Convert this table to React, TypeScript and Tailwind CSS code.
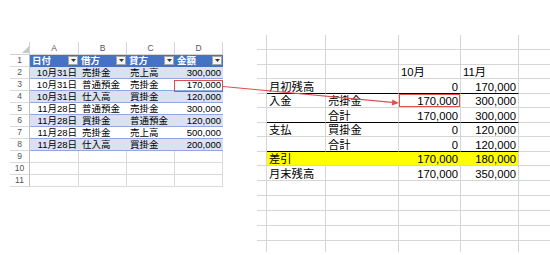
import React from "react";

const FONT = "font-['Liberation_Sans','Noto_Sans_CJK_JP',sans-serif]";

type LRow = { n: number; a: string; b: string; c: string; d: string; band: boolean; red?: boolean };

const leftRows: LRow[] = [
  { n: 2, a: "10月31日", b: "売掛金", c: "売上高", d: "300,000", band: true },
  { n: 3, a: "10月31日", b: "普通預金", c: "売掛金", d: "170,000", band: false, red: true },
  { n: 4, a: "10月31日", b: "仕入高", c: "買掛金", d: "120,000", band: true },
  { n: 5, a: "11月28日", b: "普通預金", c: "売掛金", d: "300,000", band: false },
  { n: 6, a: "11月28日", b: "買掛金", c: "普通預金", d: "120,000", band: true },
  { n: 7, a: "11月28日", b: "売掛金", c: "売上高", d: "500,000", band: false },
  { n: 8, a: "11月28日", b: "仕入高", c: "買掛金", d: "200,000", band: true },
];

function Dropdown() {
  return (
    <div className="absolute right-[1px] top-[1px] w-[10px] h-[9px] bg-[#f7f7f7] border border-[#a6a6a6] flex items-center justify-center">
      <svg width="5" height="3" viewBox="0 0 5 3">
        <polygon points="0,0 5,0 2.5,3" fill="#333" />
      </svg>
    </div>
  );
}

function RowNum({ n }: { n: number }) {
  return (
    <div className="w-[20px] h-[12px] shrink-0 border-r border-b border-r-[#bfbfbf] border-b-[#dadada] text-[8.5px] leading-[11px] text-center text-[#555]">
      {n}
    </div>
  );
}

function LeftSheet() {
  return (
    <div className={`ml-[10px] mt-[42px] w-[213px] flex flex-col ${FONT}`}>
      <div className="flex h-[13px]">
        <div className="w-[20px] shrink-0 border-r border-b border-[#cfcfcf] relative">
          <svg className="absolute left-[12px] top-[4px]" width="7" height="7" viewBox="0 0 7 7">
            <polygon points="7,0 7,7 0,7" fill="#c8c8c8" />
          </svg>
        </div>
        {[
          ["A", "w-[49px]"],
          ["B", "w-[48px]"],
          ["C", "w-[48px]"],
          ["D", "w-[48px]"],
        ].map(([l, w]) => (
          <div
            key={l}
            className={`${w} shrink-0 border-r border-b border-[#d6d6d6] text-[8.5px] leading-[12px] text-center text-[#555]`}
          >
            {l}
          </div>
        ))}
      </div>
      <div className="flex h-[12px]">
        <RowNum n={1} />
        <div className="flex bg-[#4472c4] text-white font-bold text-[9.5px] leading-[12px]">
          {[
            ["日付", "w-[49px]"],
            ["借方", "w-[48px]"],
            ["貸方", "w-[48px]"],
            ["金額", "w-[48px]"],
          ].map(([t, w]) => (
            <div key={t} className={`${w} relative pl-[2px] whitespace-nowrap`}>
              {t}
              <Dropdown />
            </div>
          ))}
        </div>
      </div>
      {leftRows.map((r) => (
        <div key={r.n} className="flex h-[12px]">
          <RowNum n={r.n} />
          <div
            className={`flex border-b border-[#8ea9db] text-[9.5px] leading-[11px] text-black ${
              r.band ? "bg-[#d9e1f2]" : "bg-white"
            }`}
          >
            <div className="w-[49px] pr-[2px] text-right whitespace-nowrap">{r.a}</div>
            <div className="w-[48px] pl-[3px] whitespace-nowrap">{r.b}</div>
            <div className="w-[48px] pl-[3px] whitespace-nowrap">{r.c}</div>
            <div className="w-[48px] pr-[2px] text-right whitespace-nowrap relative">
              {r.d}
              {r.red && <div className="absolute left-[-1px] right-0 top-[1px] bottom-[-2px] border border-[#e0504f]" />}
            </div>
          </div>
        </div>
      ))}
      {[9, 10, 11].map((n) => (
        <div key={n} className="flex h-[12px]">
          <RowNum n={n} />
          <div className="w-[49px] border-r border-b border-[#dadada]" />
          <div className="w-[48px] border-r border-b border-[#dadada]" />
          <div className="w-[48px] border-r border-b border-[#dadada]" />
          <div className="w-[48px] border-r border-b border-[#dadada]" />
        </div>
      ))}
    </div>
  );
}

type RRow = {
  h: string;
  cells: string[];
  black?: boolean;
  yellow?: boolean;
  red?: boolean;
  noBottom?: boolean;
  header?: boolean;
};

const RW = ["w-[10px]", "w-[59px]", "w-[73px]", "w-[62px]", "w-[58px]", "w-[31px]"];

const A = "h-[15px]";
const B = "h-[14px]";
const rightRows: RRow[] = [
  { h: A, cells: [] },
  { h: A, cells: [] },
  { h: B, cells: ["", "", "", "10月", "11月", ""], header: true },
  { h: A, cells: ["", "月初残高", "", "0", "170,000", ""], black: true },
  { h: B, cells: ["", "入金", "売掛金", "170,000", "300,000", ""], red: true },
  { h: A, cells: ["", "", "合計", "170,000", "300,000", ""], black: true },
  { h: B, cells: ["", "支払", "買掛金", "0", "120,000", ""] },
  { h: A, cells: ["", "", "合計", "0", "120,000", ""], black: true },
  { h: B, cells: ["", "差引", "", "170,000", "180,000", ""], yellow: true },
  { h: A, cells: ["", "月末残高", "", "170,000", "350,000", ""] },
  { h: A, cells: [] },
  { h: A, cells: [] },
  { h: A, cells: [] },
  { h: A, cells: [] },
  { h: "h-[11px]", cells: [], noBottom: true },
];

function RightSheet() {
  return (
    <div className={`ml-[34px] mt-[35px] w-[293px] flex flex-col ${FONT}`}>
      {rightRows.map((r, ri) => (
        <div key={ri} className={`flex ${r.h}`}>
          {RW.map((w, ci) => {
            const t = r.cells[ci] ?? "";
            const inBody = ci >= 1 && ci <= 4;
            const right = ci >= 3 && ci <= 4 && !r.header;
            let cls = `${w} shrink-0 relative flex items-end text-[11.3px] leading-[12px] text-black whitespace-nowrap`;
            if (ci < 5) cls += " border-r";
            if (!r.noBottom) cls += " border-b";
            if (r.yellow && inBody) {
              cls += " bg-[#ffff00]";
              cls += ci < 4 ? " border-r-[#ffff00]" : " border-r-[#d6d6d6]";
              cls += " border-b-[#d6d6d6]";
            } else {
              cls += " border-r-[#d6d6d6]";
              cls += r.black && inBody ? " border-b-black" : " border-b-[#d6d6d6]";
            }
            cls += right ? " justify-end pr-[2px]" : " pl-[2px]";
            return (
              <div key={ci} className={cls}>
                {t}
                {r.red && ci === 3 && (
                  <div className="absolute left-[0px] right-[0px] top-[0px] bottom-[0px] border border-[#e0504f]" />
                )}
              </div>
            );
          })}
        </div>
      ))}
    </div>
  );
}

export default function App() {
  return (
    <div className="relative w-[550px] h-[255px] bg-white overflow-hidden flex items-start">
      <LeftSheet />
      <RightSheet />
      <svg className="absolute left-0 top-0 pointer-events-none" width="550" height="255" viewBox="0 0 550 255">
        <line x1="223" y1="86.5" x2="392" y2="102.4" stroke="#e0504f" strokeWidth="1.2" />
        <polygon points="399,103 392.3,99.4 391.8,105.4" fill="#e0504f" />
      </svg>
    </div>
  );
}
